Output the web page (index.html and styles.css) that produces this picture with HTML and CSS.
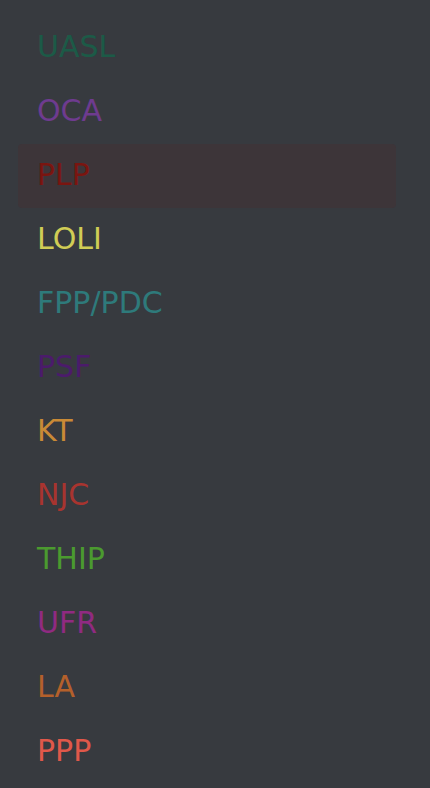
FILE: index.html
```html
<!DOCTYPE html>
<html>
<head>
<meta charset="utf-8">
<link rel="stylesheet" href="styles.css">
</head>
<body>
<ul class="list">
  <li class="item c-uasl">UASL</li>
  <li class="item c-oca">OCA</li>
  <li class="item active c-plp">PLP</li>
  <li class="item c-loli">LOLI</li>
  <li class="item c-fpp">FPP/PDC</li>
  <li class="item c-psf">PSF</li>
  <li class="item c-kt">KT</li>
  <li class="item c-njc">NJC</li>
  <li class="item c-thip">THIP</li>
  <li class="item c-ufr">UFR</li>
  <li class="item c-la">LA</li>
  <li class="item c-ppp">PPP</li>
</ul>
</body>
</html>
```
FILE: styles.css
```css
html, body {
  margin: 0;
  padding: 0;
  background: #373a3f;
  height: 100%;
}
body {
  font-family: "DejaVu Sans", "Open Sans", sans-serif;
  overflow: hidden;
}
.list {
  list-style: none;
  margin: 0;
  padding: 16px 34px 0 18px;
  display: flex;
  flex-direction: column;
}
.item {
  height: 64px;
  box-sizing: border-box;
  padding: 0 0 3px 19px;
  line-height: 61px;
  font-size: 30px;
  border-radius: 4px;
}
.active { background: #3d3539; }
.c-uasl { color: #1c5a47; }
.c-oca { color: #6e3b8f; }
.c-plp { color: #7a1510; }
.c-loli { color: #d0cc55; }
.c-fpp { color: #2e7a7b; }
.c-psf { color: #4b1b6b; }
.c-kt { color: #c98a36; }
.c-njc { color: #a8342f; }
.c-thip { color: #4b9a2f; }
.c-ufr { color: #902a81; }
.c-la { color: #b4602b; }
.c-ppp { color: #e0584a; }
```
